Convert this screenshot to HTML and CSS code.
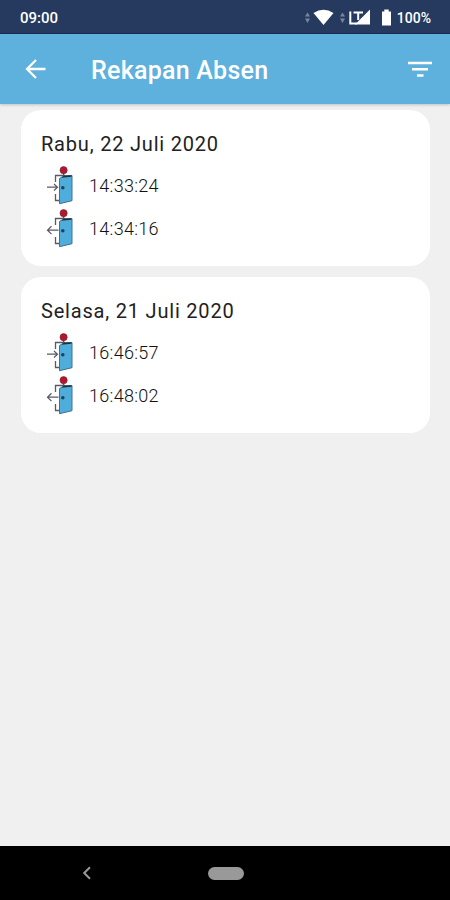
FILE: index.html
```html
<!DOCTYPE html>
<html lang="id">
<head>
    <meta charset="UTF-8">
    <meta name="viewport" content="width=device-width, initial-scale=1.0">
    <title>Rekapan Absen</title>
    <link rel="stylesheet" href="styles.css">
</head>
<body>
    <!-- door icons shared by the rows -->
    <svg class="defs" width="0" height="0">
        <symbol id="door" viewBox="0 0 28 39">
            <path d="M17.5 7V9M9.5 16V9.5H19M9.5 28V34.5H13" fill="none" stroke="#5a5a64" stroke-width="1.3" />
            <path d="M13.5 12.5 17.5 10 26 9.5V34.7L13.5 37.7Z" fill="#4eaddb" stroke="#46708c" stroke-width="1" />
            <path d="M15.5 11.8 18 9.6 25.5 9.3V10.8Z" fill="#20303d" />
            <circle cx="17.6" cy="4.2" r="3.6" fill="#b5162c" stroke="#6d2635" stroke-width=".6" />
            <circle cx="16.8" cy="21.7" r="1.8" fill="#24405a" />
        </symbol>
        <symbol id="in" viewBox="0 0 28 39">
            <use href="#door" />
            <path d="M1 21.2H11.5M8 18 11.5 21.2 8 24.5" fill="none" stroke="#5a5a64" stroke-width="1.2" />
        </symbol>
        <symbol id="out" viewBox="0 0 28 39">
            <use href="#door" />
            <path d="M12.5 21.2H1.5M5.5 17.3 1.5 21.2 5.5 25.1" fill="none" stroke="#5a5a64" stroke-width="1.2" />
        </symbol>
    </svg>

    <div class="status-bar">
        <span class="clock">09:00</span>
        <svg class="status-icons" width="90" height="20" viewBox="0 0 90 20">
            <path d="M2 8.5 4.5 4.5 7 8.5ZM2 10.5 4.5 15 7 10.5Z" fill="#7a859b" />
            <path d="M10.5 5Q20.5 -1.5 30.5 5L20.5 17Z" fill="#fff" />
            <path d="M37 8.5 39.5 4.5 42 8.5ZM37 10.5 39.5 15 42 10.5Z" fill="#7a859b" />
            <path d="M67 1.5V16.5H52Z" fill="#fff" />
            <path d="M47.3 3.5V15.5H54M50.5 4.5H60M55.2 5V12" fill="none" stroke="#fff" stroke-width="2" />
            <path d="M79 3.5H81.3V1.5H85.7V3.5H88V17.5H79Z" fill="#fff" />
        </svg>
        <span class="battery">100%</span>
    </div>

    <header class="app-bar">
        <svg class="back" width="22" height="22" viewBox="0 0 22 22">
            <path d="M20.5 11H2M11 2 2 11 11 20" fill="none" stroke="#fff" stroke-width="2.3" />
        </svg>
        <h1>Rekapan Absen</h1>
        <svg class="filter" width="24" height="18" viewBox="0 0 24 18">
            <path d="M0 3H24M4 9.2H20M9 15.6H15.5" stroke="#fff" stroke-width="2.5" />
        </svg>
    </header>

    <main class="list">
        <section class="card">
            <h2 class="date">Rabu, 22 Juli 2020</h2>
            <div class="row">
                <svg class="door"><use href="#in" /></svg>
                <span>14:33:24</span>
            </div>
            <div class="row">
                <svg class="door"><use href="#out" /></svg>
                <span>14:34:16</span>
            </div>
        </section>
        <section class="card">
            <h2 class="date">Selasa, 21 Juli 2020</h2>
            <div class="row">
                <svg class="door"><use href="#in" /></svg>
                <span>16:46:57</span>
            </div>
            <div class="row">
                <svg class="door"><use href="#out" /></svg>
                <span>16:48:02</span>
            </div>
        </section>
    </main>

    <nav class="nav-bar">
        <svg class="nav-back" width="10" height="14" viewBox="0 0 10 14">
            <path d="M8 1.3 2.2 7 8 12.7" fill="none" stroke="#999" stroke-width="2" />
        </svg>
        <div class="home"></div>
    </nav>
</body>
</html>
```
FILE: styles.css
```css
body {
    margin: 0;
    height: 900px;
    display: flex;
    flex-direction: column;
    overflow: hidden;
    font-family: Roboto, sans-serif;
    background-color: #f0f0f0;
}
.defs {
    position: absolute;
}

/* status bar */
.status-bar {
    box-sizing: border-box;
    height: 34px;
    flex: none;
    display: flex;
    align-items: center;
    padding: 2px 19px 0 20px;
    background-color: #263a60;
    border-bottom: 1px solid #1e2a58;
    color: #fff;
    font-size: 15px;
    font-weight: 500;
}
.status-icons {
    margin-left: auto;
    margin-right: 4px;
}
.battery {
    font-size: 14px;
}

/* app bar */
.app-bar {
    height: 70px;
    flex: none;
    display: flex;
    align-items: center;
    padding: 0 18px 0 25px;
    background-color: #5eb1dd;
    box-shadow: 0 1px 3px rgba(0, 0, 0, 0.2);
    color: #fff;
}
.app-bar h1 {
    margin: 4px 0 0 44px;
    font-size: 25px;
    font-weight: 500;
    line-height: 30px;
    letter-spacing: 0.25px;
}
.filter {
    margin-left: auto;
}

/* attendance cards */
.list {
    flex: 1;
    display: flex;
    flex-direction: column;
    gap: 11px;
    padding: 6px 20px 0 21px;
}
.card {
    box-sizing: border-box;
    height: 156px;
    padding: 22px 20px 0;
    border-radius: 20px;
    background-color: #fff;
}
.date {
    margin: 0 0 9px;
    font-size: 20px;
    font-weight: 400;
    line-height: 24px;
    letter-spacing: 0.8px;
    color: #222;
}
.row {
    height: 42.6px;
    display: flex;
    align-items: flex-start;
    gap: 15px;
    padding-left: 5px;
    font-size: 18px;
    font-weight: 300;
    line-height: 42px;
    letter-spacing: 0.3px;
    color: #111;
}
.door {
    width: 28px;
    height: 39px;
    margin-top: 1px;
}

/* navigation bar */
.nav-bar {
    height: 54px;
    flex: none;
    display: flex;
    align-items: center;
    padding-left: 82px;
    background-color: #000;
}
.home {
    width: 36px;
    height: 13px;
    margin-left: 115.5px;
    border-radius: 7px;
    background-color: #999;
}
```
